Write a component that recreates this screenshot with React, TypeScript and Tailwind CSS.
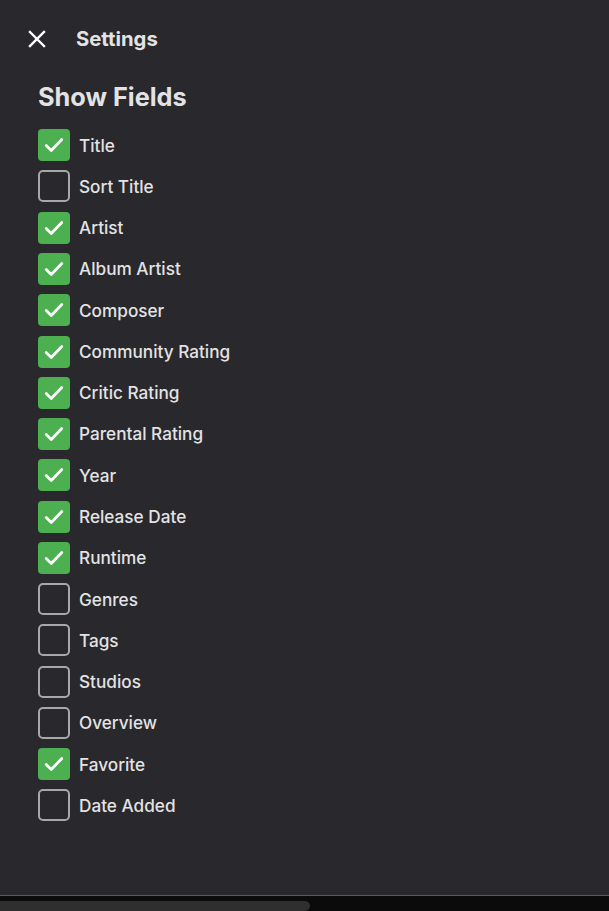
import React from "react";

const fields: [string, boolean][] = [
  ["Title", true],
  ["Sort Title", false],
  ["Artist", true],
  ["Album Artist", true],
  ["Composer", true],
  ["Community Rating", true],
  ["Critic Rating", true],
  ["Parental Rating", true],
  ["Year", true],
  ["Release Date", true],
  ["Runtime", true],
  ["Genres", false],
  ["Tags", false],
  ["Studios", false],
  ["Overview", false],
  ["Favorite", true],
  ["Date Added", false],
];

function Box({ checked }: { checked: boolean }) {
  if (checked) {
    return (
      <div className="w-[32px] h-[32px] rounded-[4px] bg-[#4caf50] flex items-center justify-center shrink-0">
        <svg width="22" height="22" viewBox="0 0 24 24" fill="none">
          <path d="M3.5 12.5l5.5 5.5L20.5 6" stroke="#fff" strokeWidth="3" strokeLinecap="round" strokeLinejoin="round" />
        </svg>
      </div>
    );
  }
  return <div className="w-[32px] h-[32px] rounded-[5px] border-2 border-[#a8a8a8] shrink-0" />;
}

export default function App() {
  return (
    <div className="w-[609px] h-[911px] bg-[#28282d] flex flex-col text-[#e3e3e3]" style={{ fontFamily: "Inter, 'Noto Sans', sans-serif" }}>
      <div className="flex-1 flex flex-col">
        <div className="h-[78px] flex items-center pl-[28px]">
          <svg width="18" height="18" viewBox="0 0 18 18" fill="none">
            <path d="M2 2l14 14M16 2L2 16" stroke="#ffffff" strokeWidth="2.4" strokeLinecap="square" />
          </svg>
          <div className="ml-[30px] text-[20.3px] font-bold leading-none">Settings</div>
        </div>
        <div className="pl-[38px]">
          <div className="text-[25.3px] font-bold leading-[32px] h-[32px] mt-[3px]">Show Fields</div>
          <div className="mt-[11.6px] flex flex-col">
            {fields.map(([name, on]) => (
              <div key={name} className="h-[41.28px] flex items-center gap-[9px]">
                <Box checked={on} />
                <span className="text-[17.2px] font-medium leading-none">{name}</span>
              </div>
            ))}
          </div>
        </div>
      </div>
      <div className="h-[1px] bg-[#5a5a5e]" />
      <div className="h-[15px] bg-[#0b0b0b] flex items-end">
        <div className="w-[310px] h-[10px] bg-[#2f2f2f] rounded-r-[5px]" />
      </div>
    </div>
  );
}
